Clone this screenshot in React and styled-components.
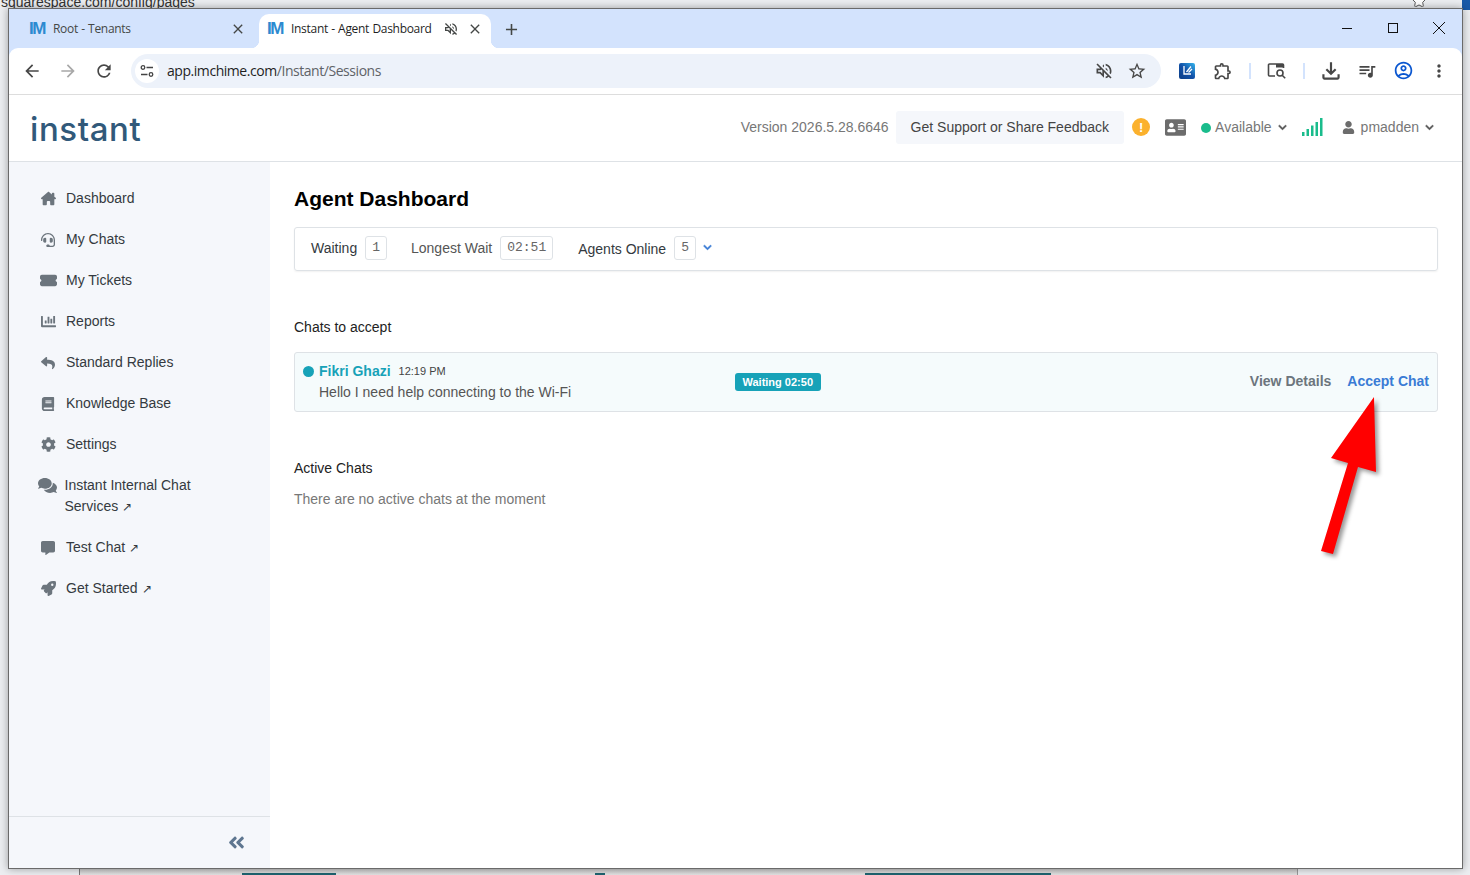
import React from "react";
import styled, { createGlobalStyle } from "styled-components";
import {
  FaHeadset, FaChartBar, FaReply, FaBook, FaCog, FaComments,
  FaCommentAlt, FaRocket, FaAddressCard, FaUser, FaAngleDoubleLeft, FaChevronDown, FaStar,
} from "react-icons/fa";
import { FaTicketSimple, FaHouseChimney } from "react-icons/fa6";
import {
  MdArrowBack, MdArrowForward, MdRefresh, MdOutlineVolumeOff, MdStarBorder,
  MdOutlineExtension, MdOutlineFileDownload, MdQueueMusic, MdOutlineAccountCircle,
  MdMoreVert, MdClose, MdAdd,
} from "react-icons/md";

const GlobalStyle = createGlobalStyle`
  html, body { margin: 0; padding: 0; background: #e9ebee; overflow: hidden; }
  * { box-sizing: border-box; }
  body { font-family: "Liberation Sans", Arial, sans-serif; }
  svg { flex: none; }
`;

const Desktop = styled.div`
  position: relative;
  width: 1470px;
  height: 875px;
  overflow: hidden;
  background: #eceef1;
  padding: 8px 7px 6px 8px;
`;

const BackUrl = styled.div`
  position: absolute;
  left: 1px;
  top: -6px;
  font-size: 14px;
  line-height: 16px;
  color: #333;
`;

const BackStar = styled(FaStar)`
  position: absolute;
  left: 1412px;
  top: -6px;
  width: 14px;
  height: 13px;
  color: #fff;
  stroke: #555;
  stroke-width: 40px;
`;

const BackBadge = styled.div`
  position: absolute;
  left: 1462px;
  top: 0;
  width: 8px;
  height: 10px;
  background: #1a5aa8;
`;

const BackWindow = styled.div`
  position: absolute;
  left: 79px;
  top: 868px;
  width: 1219px;
  height: 7px;
  background: linear-gradient(#c4c4c4, #e4e4e4);
  border-left: 1px solid #777;
  border-right: 1px solid #999;
`;

const BackBar = styled.div`
  position: absolute;
  left: ${(p) => p.$left}px;
  top: 5px;
  width: ${(p) => p.$width}px;
  height: 2px;
  background: ${(p) => p.$color || "#1f6470"};
`;

const Window = styled.div`
  position: relative;
  width: 1455px;
  height: 861px;
  display: flex;
  flex-direction: column;
  background: #fff;
  border: 1px solid #6a6a6a;
  box-shadow: 0 0 8px rgba(0, 0, 0, 0.35);
`;

const TabStrip = styled.div`
  height: 39px;
  flex: none;
  display: flex;
  background: #d3e3fd;
  padding: 5px 0 0 6px;
`;

const Tab = styled.div`
  position: relative;
  width: ${(p) => p.$width}px;
  height: 34px;
  display: flex;
  align-items: center;
  padding: 0 0 4px ${(p) => p.$pad}px;
  margin-left: ${(p) => p.$left || 0}px;
  border-radius: 10px 10px 0 0;
  background: ${(p) => (p.$active ? "#fff" : "transparent")};
  color: ${(p) => (p.$active ? "#1f1f1f" : "#444746")};
  font: 12px/16px "Open Sans", sans-serif;
  ${(p) =>
    p.$active &&
    `
    &::before, &::after {
      content: "";
      position: absolute;
      bottom: 0;
      width: 8px;
      height: 8px;
    }
    &::before { left: -8px; background: radial-gradient(circle at 0 0, #d3e3fd 8px, #fff 8.5px); }
    &::after { right: -8px; background: radial-gradient(circle at 100% 0, #d3e3fd 8px, #fff 8.5px); }
  `}
`;

const Favicon = styled.span`
  width: 16px;
  flex: none;
  margin-right: 8px;
  font: 700 17px/16px "Liberation Sans", sans-serif;
  color: #2c8ad0;
  letter-spacing: -1.5px;
`;

const TabTitle = styled.span`
  flex: 1;
  white-space: nowrap;
  letter-spacing: -0.3px;
  word-spacing: 0.5px;
`;

const TabIcon = styled.span`
  display: flex;
  width: 16px;
  height: 16px;
  flex: none;
  align-items: center;
  justify-content: center;
  margin-right: ${(p) => p.$right}px;
  color: #444746;
  font-size: 16px;
`;

const NewTab = styled.div`
  width: 20px;
  height: 30px;
  margin-left: 10px;
  display: flex;
  align-items: center;
  justify-content: center;
  font-size: 19px;
  color: #444746;
`;

const WindowControls = styled.div`
  margin-left: auto;
  display: flex;
  align-items: center;
  height: 28px;
  padding-right: 18px;
  gap: 36px;
  color: #111;
`;

const Control = styled.div`
  width: 10px;
  height: 10px;
  display: flex;
  align-items: center;
  justify-content: center;
`;

const MinLine = styled.div`
  width: 10px;
  height: 1px;
  background: #111;
`;

const MaxBox = styled.div`
  width: 10px;
  height: 10px;
  border: 1px solid #111;
`;

const Toolbar = styled.div`
  height: 47px;
  flex: none;
  display: flex;
  align-items: center;
  background: #fff;
  border-bottom: 1px solid #ddd;
  border-radius: 9px 9px 0 0;
  box-shadow: 0 -9px 0 0 #d3e3fd;
  padding: 0 0 1px 13px;
`;

const ChromeButton = styled.div`
  width: 20px;
  height: 20px;
  flex: none;
  display: flex;
  align-items: center;
  justify-content: center;
  font-size: ${(p) => p.$size || 20}px;
  color: ${(p) => p.$color || "#474747"};
  margin-right: ${(p) => p.$right ?? 16}px;
`;

const AddressBar = styled.div`
  width: 1030px;
  height: 34px;
  flex: none;
  display: flex;
  align-items: center;
  border-radius: 17px;
  background: #edf2fa;
  padding: 0 14px 0 4px;
  margin: 0 16px 0 1px;
`;

const SiteChip = styled.div`
  width: 24px;
  height: 24px;
  flex: none;
  display: flex;
  align-items: center;
  justify-content: center;
  background: #fff;
  border-radius: 50%;
  margin-right: 8px;
`;

const Url = styled.div`
  flex: 1;
  font: 14px/18px "Open Sans", sans-serif;
  letter-spacing: -0.45px;
  color: #5f6368;
  b { font-weight: 400; color: #1f1f1f; }
`;

const ToolDivider = styled.div`
  width: 2px;
  height: 16px;
  flex: none;
  background: #d3e3fd;
  margin: ${(p) => p.$margin};
`;

const AppHeader = styled.header`
  height: 67px;
  flex: none;
  display: flex;
  align-items: center;
  border-bottom: 1px solid #dee2e6;
  padding: 0 28px 2px 21px;
`;

const Logo = styled.div`
  font: 500 33px/40px Inter, sans-serif;
  letter-spacing: 0.6px;
  color: #31597a;
  padding-top: 4px;
`;

const Version = styled.div`
  margin-left: auto;
  font-size: 14px;
  color: #777;
`;

const SupportButton = styled.div`
  height: 33px;
  display: flex;
  align-items: center;
  padding: 0 15px;
  margin: 0 8px 0 7px;
  border-radius: 3px;
  background: #f5f7fb;
  color: #444;
  font-size: 14px;
`;

const AlertDot = styled.div`
  width: 18px;
  height: 18px;
  display: flex;
  align-items: center;
  justify-content: center;
  border-radius: 50%;
  background: #fbb12d;
  color: #fff;
  font-size: 13px;
  font-weight: 700;
  margin-right: 15px;
`;

const StatusDot = styled.span`
  width: 10px;
  height: 10px;
  margin: 1px 4px 0 15px;
  border-radius: 50%;
  background: #1abc8c;
`;

const Muted = styled.span`
  font-size: 14px;
  color: #777;
`;

const Caret = styled(FaChevronDown)`
  width: 9px;
  height: 9px;
  margin-left: ${(p) => p.$left}px;
  color: ${(p) => p.$color || "#555"};
  stroke: currentColor;
  stroke-width: 30px;
`;

const HeaderIcon = styled.span`
  display: flex;
  color: #6c6c6c;
  margin: ${(p) => p.$margin};
`;

const Body = styled.div`
  flex: 1;
  min-height: 0;
  display: flex;
`;

const Sidebar = styled.aside`
  width: 261px;
  flex: none;
  display: flex;
  flex-direction: column;
  background: #f5f7fb;
`;

const Nav = styled.nav`
  flex: 1;
  padding-top: 16px;
`;

const NavItem = styled.div`
  display: flex;
  align-items: flex-start;
  padding: 10px 40px 10px ${(p) => (p.$wide ? 29 : 31)}px;
  font-size: 14px;
  line-height: 21px;
  color: #343a40;
`;

const NavIcon = styled.span`
  width: ${(p) => (p.$wide ? 19 : 16)}px;
  height: 21px;
  flex: none;
  display: flex;
  align-items: center;
  justify-content: center;
  margin-right: ${(p) => (p.$wide ? 7.5 : 10)}px;
  color: #6c757d;
  font-size: ${(p) => p.$size || 15}px;
`;

const Ext = styled.span`
  font-size: 12px;
  line-height: 0;
  margin-left: 4px;
`;

const SideFooter = styled.div`
  height: 52px;
  flex: none;
  display: flex;
  align-items: center;
  justify-content: flex-end;
  border-top: 1px solid #dee2e6;
  padding: 0 24px 0 0;
  color: #5e7690;
  font-size: 19px;
`;

const Main = styled.main`
  flex: 1;
  min-width: 0;
  padding: 24px 24px 0 24px;
`;

const Title = styled.h1`
  margin: 0 0 15px;
  font-size: 21px;
  line-height: 26px;
  font-weight: 700;
  color: #000;
`;

const StatsBar = styled.div`
  height: 44px;
  display: flex;
  align-items: center;
  padding: 0 16px 3px;
  border: 1px solid #dee2e6;
  border-radius: 3px;
  box-shadow: 0 1px 2px rgba(0, 0, 0, 0.06);
  font-size: 14px;
`;

const StatLabel = styled.span`
  color: ${(p) => p.$color || "#343a40"};
  margin-left: ${(p) => p.$left || 0}px;
  position: relative;
  top: ${(p) => p.$drop || 0}px;
`;

const StatValue = styled.span`
  height: 24px;
  display: flex;
  align-items: center;
  padding: 0 6px;
  margin-left: 8px;
  border: 1px solid #dee2e6;
  border-radius: 3px;
  font: 13px "Liberation Mono", monospace;
  color: #666;
`;

const SectionLabel = styled.div`
  font-size: 14px;
  line-height: 20px;
  color: #222;
  margin-top: ${(p) => p.$top}px;
  margin-bottom: ${(p) => p.$bottom}px;
`;

const ChatCard = styled.div`
  height: 60px;
  display: flex;
  align-items: center;
  padding: 0 8px;
  background: #f5fbfc;
  border: 1px solid #dee2e6;
  border-radius: 3px;
`;

const ChatInfo = styled.div`
  width: 432px;
  flex: none;
`;

const ChatLine = styled.div`
  display: flex;
  align-items: center;
  line-height: 21px;
`;

const PresenceDot = styled.span`
  width: 11px;
  height: 11px;
  margin-right: 5px;
  border-radius: 50%;
  background: #17a2b8;
`;

const ChatName = styled.span`
  font-size: 14px;
  font-weight: 700;
  color: #17a2b8;
  margin-right: 8px;
`;

const ChatTime = styled.span`
  font-size: 11px;
  color: #444;
`;

const ChatMessage = styled.div`
  font-size: 14px;
  line-height: 21px;
  color: #555;
  padding-left: 16px;
`;

const WaitBadge = styled.span`
  height: 18px;
  padding: 0 7.5px;
  display: flex;
  align-items: center;
  border-radius: 3px;
  background: #17a2b8;
  color: #fff;
  font-size: 11px;
  font-weight: 700;
  margin-top: -1px;
`;

const ChatActions = styled.div`
  margin-left: auto;
  display: flex;
  gap: 16px;
  margin-top: -2px;
  font-size: 14px;
  font-weight: 700;
`;

const ChatAction = styled.span`
  color: ${(p) => p.$color};
`;

const EmptyText = styled.div`
  font-size: 14px;
  line-height: 20px;
  color: #777;
`;

const Annotation = styled.svg`
  position: absolute;
  left: 1310px;
  top: 390px;
  width: 80px;
  height: 175px;
  filter: drop-shadow(3px 3px 2px rgba(0, 0, 0, 0.4));
`;

const navItems = [
  { icon: FaHouseChimney, label: "Dashboard", size: 15 },
  { icon: FaHeadset, label: "My Chats", size: 14 },
  { icon: FaTicketSimple, label: "My Tickets", size: 17 },
  { icon: FaChartBar, label: "Reports", size: 15 },
  { icon: FaReply, label: "Standard Replies", size: 14 },
  { icon: FaBook, label: "Knowledge Base", size: 14 },
  { icon: FaCog, label: "Settings", size: 15 },
  { icon: FaComments, label: "Instant Internal Chat Services", size: 19, wide: true, ext: true },
  { icon: FaCommentAlt, label: "Test Chat", size: 14, ext: true },
  { icon: FaRocket, label: "Get Started", size: 15, ext: true },
];

const ThinClose = () => (
  <svg width="14" height="14" viewBox="0 0 14 14" stroke="#111" strokeWidth="1" fill="none">
    <path d="m1 1 12 12M13 1 1 13" />
  </svg>
);

const SignalBars = () => (
  <svg width="21" height="18" viewBox="0 0 21 18" fill="#1abc8c">
    <rect x="0" y="14" width="2.5" height="4" />
    <rect x="4.5" y="11" width="2.5" height="7" />
    <rect x="9" y="7.5" width="2.5" height="10.5" />
    <rect x="13.5" y="4" width="2.5" height="14" />
    <rect x="18" y="0" width="2.5" height="18" />
  </svg>
);

const ExtensionLogo = () => (
  <svg width="16" height="16" viewBox="0 0 16 16">
    <defs>
      <linearGradient id="extg" x1="1" y1="0" x2="0" y2="1">
        <stop offset="0" stopColor="#35b6ee" />
        <stop offset="0.5" stopColor="#1251a8" />
        <stop offset="1" stopColor="#0c3d86" />
      </linearGradient>
    </defs>
    <rect width="16" height="16" rx="2" fill="url(#extg)" />
    <path d="M5 3v8h7M7.5 9 12 3.5M9.5 9.5 13 6" stroke="#fff" strokeWidth="1.3" fill="none" />
  </svg>
);

const SearchWindow = () => (
  <svg width="20" height="18" viewBox="0 0 20 18" fill="none" stroke="#474747" strokeWidth="1.6">
    <path d="M8 14H2.5a1 1 0 0 1-1-1V3a1 1 0 0 1 1-1h13a1 1 0 0 1 1 1v3" />
    <rect x="9" y="2" width="7.5" height="3.5" fill="#474747" stroke="none" />
    <circle cx="13" cy="11" r="3" />
    <path d="m15.2 13.2 3 3" />
  </svg>
);

const SiteTune = () => (
  <svg width="14" height="14" viewBox="0 0 14 14" fill="none" stroke="#444" strokeWidth="1.3">
    <circle cx="3" cy="3.5" r="1.8" />
    <path d="M6.5 3.5H13M1 10.5h6.5" />
    <circle cx="11" cy="10.5" r="1.8" />
  </svg>
);

const App = () => {
  return (
    <>
      <GlobalStyle />
      <Desktop>
        <BackUrl>squarespace.com/config/pages</BackUrl>
        <BackStar />
        <BackBadge />
        <BackWindow>
          <BackBar $left={162} $width={94} />
          <BackBar $left={515} $width={10} />
          <BackBar $left={785} $width={186} />
        </BackWindow>
        <Window>
          <TabStrip>
            <Tab $width={236} $pad={14}>
              <Favicon>IM</Favicon>
              <TabTitle>Root - Tenants</TabTitle>
              <TabIcon $right={5}><MdClose /></TabIcon>
            </Tab>
            <Tab $width={232} $pad={8} $left={8} $active>
              <Favicon>IM</Favicon>
              <TabTitle>Instant - Agent Dashboard</TabTitle>
              <TabIcon $right={8}><MdOutlineVolumeOff /></TabIcon>
              <TabIcon $right={8}><MdClose /></TabIcon>
            </Tab>
            <NewTab><MdAdd /></NewTab>
            <WindowControls>
              <Control><MinLine /></Control>
              <Control><MaxBox /></Control>
              <Control><ThinClose /></Control>
            </WindowControls>
          </TabStrip>
          <Toolbar>
            <ChromeButton><MdArrowBack /></ChromeButton>
            <ChromeButton $color="#a8a8a8"><MdArrowForward /></ChromeButton>
            <ChromeButton><MdRefresh /></ChromeButton>
            <AddressBar>
              <SiteChip><SiteTune /></SiteChip>
              <Url><b>app.imchime.com</b>/Instant/Sessions</Url>
              <ChromeButton $right={13}><MdOutlineVolumeOff /></ChromeButton>
              <ChromeButton $right={0}><MdStarBorder /></ChromeButton>
            </AddressBar>
            <ChromeButton $right={16}><ExtensionLogo /></ChromeButton>
            <ChromeButton $right={0}><MdOutlineExtension /></ChromeButton>
            <ToolDivider $margin="0 16px 0 16px" />
            <ChromeButton $right={0}><SearchWindow /></ChromeButton>
            <ToolDivider $margin="0 16px 0 16px" />
            <ChromeButton $size={26} $right={16}><MdOutlineFileDownload /></ChromeButton>
            <ChromeButton $right={16}><MdQueueMusic /></ChromeButton>
            <ChromeButton $color="#0b57d0" $size={21} $right={16}><MdOutlineAccountCircle /></ChromeButton>
            <ChromeButton><MdMoreVert /></ChromeButton>
          </Toolbar>
          <AppHeader>
            <Logo>instant</Logo>
            <Version>Version 2026.5.28.6646</Version>
            <SupportButton>Get Support or Share Feedback</SupportButton>
            <AlertDot>!</AlertDot>
            <HeaderIcon $margin="0"><FaAddressCard size={21} /></HeaderIcon>
            <StatusDot />
            <Muted>Available</Muted>
            <Caret $left={6} />
            <HeaderIcon $margin="0 0 0 15px"><SignalBars /></HeaderIcon>
            <HeaderIcon $margin="0 6px 0 19px"><FaUser size={13} /></HeaderIcon>
            <Muted>pmadden</Muted>
            <Caret $left={6} />
          </AppHeader>
          <Body>
            <Sidebar>
              <Nav>
                {navItems.map((item) => (
                  <NavItem key={item.label} $wide={item.wide}>
                    <NavIcon $wide={item.wide} $size={item.size}><item.icon /></NavIcon>
                    <span>
                      {item.label}
                      {item.ext && <Ext>↗</Ext>}
                    </span>
                  </NavItem>
                ))}
              </Nav>
              <SideFooter><FaAngleDoubleLeft /></SideFooter>
            </Sidebar>
            <Main>
              <Title>Agent Dashboard</Title>
              <StatsBar>
                <StatLabel>Waiting</StatLabel>
                <StatValue>1</StatValue>
                <StatLabel $left={24} $color="#555">Longest Wait</StatLabel>
                <StatValue>02:51</StatValue>
                <StatLabel $left={25} $drop={1}>Agents Online</StatLabel>
                <StatValue>5</StatValue>
                <Caret $left={7} $color="#3a7bd5" />
              </StatsBar>
              <SectionLabel $top={46} $bottom={15}>Chats to accept</SectionLabel>
              <ChatCard>
                <ChatInfo>
                  <ChatLine>
                    <PresenceDot />
                    <ChatName>Fikri Ghazi</ChatName>
                    <ChatTime>12:19 PM</ChatTime>
                  </ChatLine>
                  <ChatMessage>Hello I need help connecting to the Wi-Fi</ChatMessage>
                </ChatInfo>
                <WaitBadge>Waiting 02:50</WaitBadge>
                <ChatActions>
                  <ChatAction $color="#6c757d">View Details</ChatAction>
                  <ChatAction $color="#3a7bd5">Accept Chat</ChatAction>
                </ChatActions>
              </ChatCard>
              <SectionLabel $top={46} $bottom={11}>Active Chats</SectionLabel>
              <EmptyText>There are no active chats at the moment</EmptyText>
            </Main>
          </Body>
        </Window>
        <Annotation viewBox="1310 390 80 175">
          <polygon
            points="1374,397 1331,458 1348,463 1321,551 1333,554 1358,467 1376,472"
            fill="#ff0000"
          />
        </Annotation>
      </Desktop>
    </>
  );
};

export default App;
